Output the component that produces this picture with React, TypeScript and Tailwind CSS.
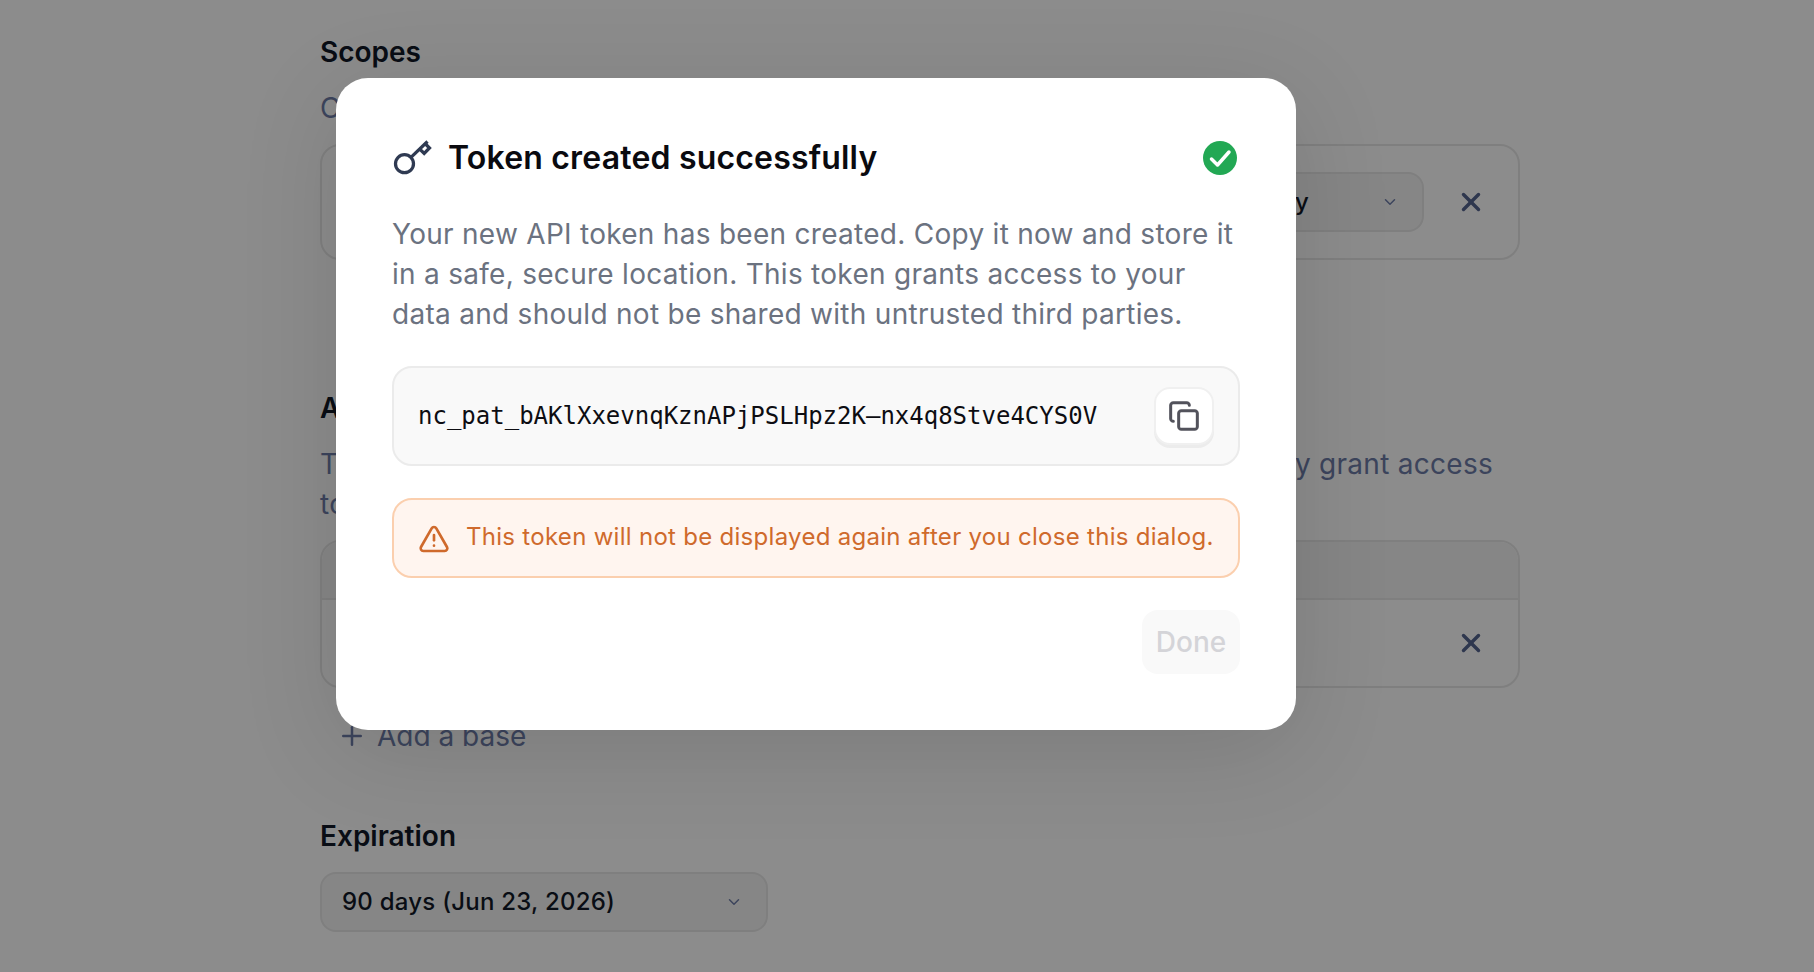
import { ChevronDown, Copy, Plus, TriangleAlert, X } from 'lucide-react';

const KeyIcon = () => (
  <svg width="40" height="40" viewBox="0 0 40 40" fill="none" stroke="#2f3a52" strokeWidth="3.25" className="shrink-0">
    <circle cx="12.5" cy="25.7" r="9" />
    <path d="M19.2 19.2 35.5 3.5" />
    <path d="M27 10.3 32.2 15.5 37.5 10 32.5 5" />
  </svg>
);

const CheckBadge = () => (
  <svg width="34" height="34" viewBox="0 0 34 34" className="shrink-0">
    <circle cx="17" cy="17" r="17" fill="#22a854" />
    <path d="M8.5 18 14.5 24 26 11" fill="none" stroke="#fff" strokeWidth="3.5" strokeLinecap="round" strokeLinejoin="round" />
  </svg>
);

const Background = () => (
  <div className="w-full h-[972px] overflow-hidden bg-white pl-[320px] pt-[34px] font-['Inter',sans-serif]">
    <div className="w-[1200px]">
      <h2 className="text-[28px] leading-9 font-semibold text-[#111827]">Scopes</h2>
      <p className="mt-[18px] text-[28px] leading-10 tracking-[0.01em] text-[#6d7ca8]">Choose what this token can do</p>
      <div className="mt-4 h-[116px] rounded-[20px] border-2 border-[#e8e8e8] flex items-center justify-end pr-[32px] gap-[32px]">
        <div className="w-[528px] h-[60px] rounded-2xl border-2 border-[#e8e8e8] bg-[#f5f5f5] flex items-center justify-between pl-5 pr-[23px]">
          <span className="text-2xl tracking-[0.01em] font-medium text-[#111827]">Read and write access, base only</span>
          <ChevronDown size={18} className="text-[#6d7ca8]" />
        </div>
        <X size={30} strokeWidth={2.75} className="text-[#55648f]" />
      </div>
      <h2 className="mt-[130px] text-[28px] leading-9 font-semibold text-[#111827]">Access</h2>
      <p className="mt-[18px] text-[28px] leading-10 tracking-[0.01em] text-[#6d7ca8]">
        The bases and workspaces listed here are the only ones that can actually grant access<br />to
      </p>
      <div className="mt-4 h-[148px] rounded-[20px] border-2 border-[#e8e8e8] overflow-hidden">
        <div className="h-[58px] bg-[#f5f5f5] border-b-2 border-[#e8e8e8]" />
        <div className="h-[86px] flex items-center justify-end pr-[32px]">
          <X size={30} strokeWidth={2.75} className="text-[#55648f]" />
        </div>
      </div>
      <div className="mt-[30px] pl-[17px] flex items-center gap-[10px] text-[28px] leading-9 text-[#6d7ca8]">
        <Plus size={30} />
        <span>Add a base</span>
      </div>
      <h2 className="mt-[64px] text-[28px] leading-9 font-semibold text-[#111827]">Expiration</h2>
      <div className="mt-[18px] w-[448px] h-[60px] rounded-2xl border-2 border-[#e8e8e8] bg-[#f5f5f5] flex items-center justify-between pl-5 pr-[23px]">
        <span className="text-2xl tracking-[0.01em] font-medium text-[#111827]">90 days (Jun 23, 2026)</span>
        <ChevronDown size={18} className="text-[#6d7ca8]" />
      </div>
    </div>
  </div>
);

export default function App() {
  return (
    <div className="relative w-full h-[972px] overflow-hidden">
      <Background />
      <div className="absolute inset-0 bg-black/45 pl-[336px] pt-[78px] font-['Inter',sans-serif]">
        <div className="w-[960px] h-[652px] rounded-[32px] bg-white p-14 shadow-[0_20px_100px_rgba(0,0,0,0.12)]">
          <div className="h-12 flex items-center">
            <KeyIcon />
            <h1 className="ml-4 flex-1 text-[32px] leading-10 tracking-[0.18px] font-semibold text-[#0a0a0f]">Token created successfully</h1>
            <div className="mr-[3px]">
              <CheckBadge />
            </div>
          </div>
          <p className="mt-8 text-[28px] leading-10 tracking-[0.01em] text-[#6b7280]">
            Your new API token has been created. Copy it now and store it in a safe, secure location. This token grants
            access to your data and should not be shared with untrusted third parties.
          </p>
          <div className="mt-8 h-[100px] rounded-[20px] border-2 border-[#ebebeb] bg-[#f9f9f9] flex items-center justify-between pl-6 pr-6">
            <code className="font-['DejaVu_Sans_Mono',monospace] text-2xl text-[#0d0d12]">nc_pat_bAKlXxevnqKznAPjPSLHpz2K–nx4q8Stve4CYS0V</code>
            <button className="w-[60px] h-[58px] rounded-2xl border-2 border-[#f0f0f0] bg-white shadow-[0_3px_0_#ececec] flex items-center justify-center">
              <Copy size={32} strokeWidth={2.25} className="text-[#52525b]" />
            </button>
          </div>
          <div className="mt-8 h-20 rounded-[20px] border-2 border-[#fbcfae] bg-[#fff5ef] flex items-center pl-6 gap-4">
            <TriangleAlert size={32} className="mt-[2px] text-[#cf6a2c]" />
            <span className="mb-[3px] text-2xl tracking-[0.012em] text-[#cf6a2c]">This token will not be displayed again after you close this dialog.</span>
          </div>
          <div className="mt-8 flex justify-end">
            <button className="w-[98px] h-16 rounded-2xl bg-[#f9f9f9] text-[28px] font-medium text-[#d4d4d8]">Done</button>
          </div>
        </div>
      </div>
    </div>
  );
}
